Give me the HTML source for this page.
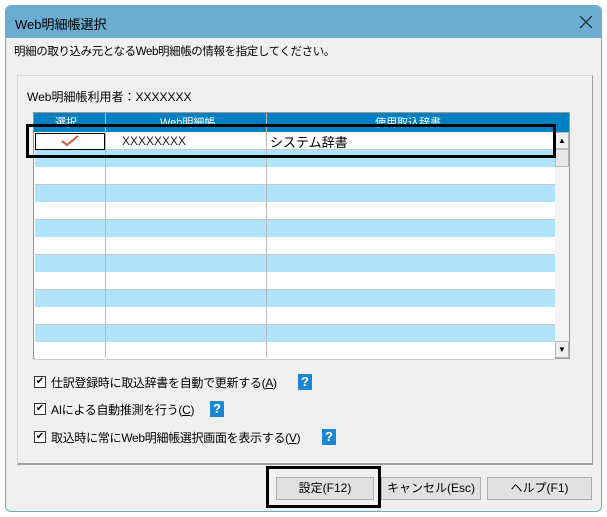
<!DOCTYPE html>
<html><head><meta charset="utf-8"><style>
*{box-sizing:border-box;margin:0;padding:0}
body{width:607px;height:517px;background:#fff;position:relative;overflow:hidden;font-family:"Liberation Sans","Noto Sans CJK JP",sans-serif;font-size:12px;color:#000}
.a{position:absolute;white-space:nowrap}
.win{left:5px;top:5px;width:597px;height:507px;background:#f0f0f0;border:1px solid #6aadd0;border-radius:6px;overflow:hidden}
.title{left:0;top:0;width:597px;height:32px;background:#6aadd0}
.row{left:35px;width:520px;height:18px;border-bottom:1px solid #c8c8c8}
.vl{width:1px;background:#c0c0c0}
.cb{width:12px;height:12px;border:1px solid #333;background:#fff;font-size:10px;line-height:10px;text-align:center}
.q{width:14px;height:16px;background:#1a87d0;color:#fff;font-weight:bold;font-size:13px;line-height:16px;text-align:center}
.btn{height:23px;border:1px solid #adadad;background:#e1e1e1;text-align:center;line-height:21px;font-size:12px}
.lb{font-size:12px;letter-spacing:-0.3px}
</style></head><body>
<div class="a win">
<div class="a title"></div>
<div class="a" style="left:9px;top:8px;font-size:13px">Web明細帳選択</div>
<svg class="a" style="left:573px;top:9px" width="14" height="14"><path d="M1 1L13 13M13 1L1 13" stroke="#222" stroke-width="1.2"/></svg>
</div>
<div class="a" style="left:14px;top:43px;font-size:11.5px;letter-spacing:-0.4px">明細の取り込み元となるWeb明細帳の情報を指定してください。</div>
<div class="a" style="left:17px;top:75px;width:576px;height:390px;border:1px solid #fff;border-right-color:#a0a0a0;border-bottom:2px solid #a0a0a0;border-top-color:#d8d8d8;border-left-color:#d8d8d8"></div>
<div class="a" style="left:27px;top:88px">Web明細帳利用者：XXXXXXX</div>
<div class="a" style="left:33px;top:112px;width:537px;height:247px;border:1px solid #999;background:#fff"></div>
<div id="rows"></div>
<script>
var h='';for(var i=0;i<13;i++){var y=132+i*17.5;h+='<div class="a row" style="top:'+y+'px;background:'+(i%2? '#b0e4fa':'#fff')+'"></div>';}
document.getElementById('rows').innerHTML=h;
</script>
<div class="a" style="left:34px;top:113px;width:521px;height:19px;background:#0080c0"></div>
<div class="a" style="left:555px;top:113px;width:14px;height:19px;background:#0080c0"></div>
<div class="a" style="left:55px;top:114px;color:#fff;font-size:11px">選択</div>
<div class="a" style="left:160px;top:114px;color:#fff;font-size:11px">Web明細帳</div>
<div class="a" style="left:375px;top:114px;color:#fff;font-size:11px">使用取込辞書</div>
<div class="a vl" style="left:105px;top:113px;height:245px;background:#b8b8b8"></div>
<div class="a vl" style="left:266px;top:113px;height:245px;background:#b8b8b8"></div>
<div class="a" style="left:35px;top:133px;width:70px;height:17px;border:1px solid #000;background:#fff"></div>
<svg class="a" style="left:61px;top:135px" width="18" height="12"><path d="M1 6L6 10L17 1" fill="none" stroke="#d0553a" stroke-width="2"/></svg>
<div class="a" style="left:122px;top:134px;font-size:12px;color:#222">XXXXXXXX</div>
<div class="a" style="left:270px;top:132px;font-size:13px">システム辞書</div>
<div class="a" style="left:555px;top:132px;width:14px;height:226px;background:#f4f4f4"></div>
<div class="a" style="left:555px;top:132px;width:14px;height:17px;background:#f0f0f0;border:1px solid #bbb;font-size:8px;text-align:center;line-height:15px">▲</div>
<div class="a" style="left:555px;top:149px;width:14px;height:18px;background:#e8e8e8;border:1px solid #bbb"></div>
<div class="a" style="left:555px;top:341px;width:14px;height:17px;background:#f0f0f0;border:1px solid #bbb;font-size:8px;text-align:center;line-height:15px">▼</div>
<div class="a" style="left:26px;top:124px;width:530px;height:34px;border:3px solid #000"></div>
<div class="a cb" style="left:34px;top:376px">✔</div><div class="a lb" style="left:51px;top:374px">仕訳登録時に取込辞書を自動で更新する(<u>A</u>)</div><div class="a q" style="left:298px;top:374px">?</div>
<div class="a cb" style="left:34px;top:403px">✔</div><div class="a lb" style="left:51px;top:401px">AIによる自動推測を行う(<u>C</u>)</div><div class="a q" style="left:210px;top:401px">?</div>
<div class="a cb" style="left:34px;top:431px">✔</div><div class="a lb" style="left:51px;top:429px">取込時に常にWeb明細帳選択画面を表示する(<u>V</u>)</div><div class="a q" style="left:322px;top:429px">?</div>
<div class="a btn" style="left:276px;top:477px;width:98px">設定(F12)</div>
<div class="a btn" style="left:381px;top:477px;width:100px">キャンセル(Esc)</div>
<div class="a btn" style="left:487px;top:477px;width:105px">ヘルプ(F1)</div>
<div class="a" style="left:266px;top:466px;width:115px;height:42px;border:3px solid #000"></div>
</body></html>
